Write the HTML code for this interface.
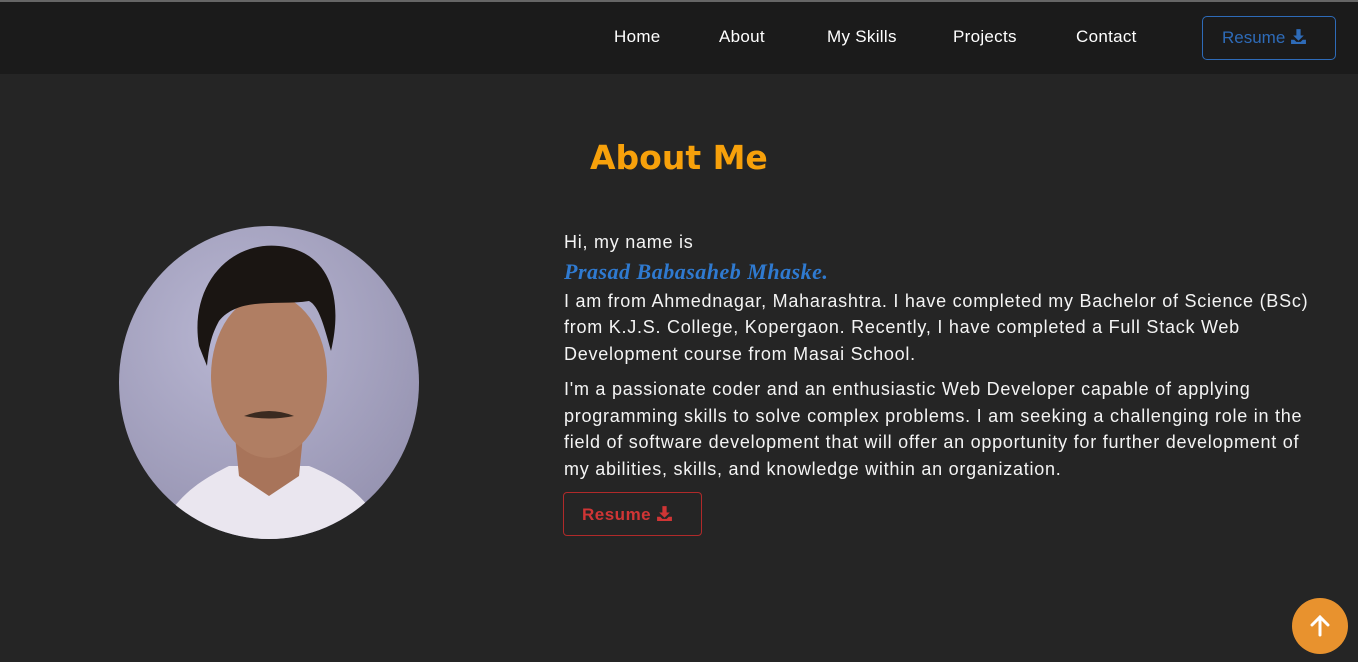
<!DOCTYPE html>
<html><head><meta charset="utf-8"><style>
*{margin:0;padding:0;box-sizing:border-box}
body{width:1358px;height:662px;background:#252525;font-family:"Liberation Sans",sans-serif;color:#fff;position:relative;overflow:hidden}
.top{position:absolute;top:0;left:0;width:1358px;height:2px;background:#666}
nav{position:absolute;top:2px;left:0;width:1358px;height:72px;background:#1b1b1b}
nav a{position:absolute;top:25px;font-size:17px;color:#fff;letter-spacing:0.3px}
.rb{position:absolute;left:1202px;top:14px;width:134px;height:44px;border:1px solid #2e6bb8;border-radius:5px;color:#2e6bb8;font-size:17px;padding:11px 0 0 19px}
h1{position:absolute;left:590px;top:138px;font-size:33px;color:#f7a10b;font-family:"Comic Sans MS","DejaVu Sans",sans-serif;font-weight:bold}
.txt{position:absolute;left:564px;top:229px;width:800px;font-size:18px;letter-spacing:0.75px;line-height:26.5px;color:#f4f4f4;white-space:nowrap}
.name{display:block;height:32px;line-height:32px;font-family:"Liberation Serif",serif;font-style:italic;color:#2f7ad0;font-size:22px;font-weight:bold;letter-spacing:0.5px}
.rr{position:absolute;left:563px;top:492px;width:139px;height:44px;border:1px solid #b02a2a;border-radius:4px;color:#d03535;font-size:17px;font-weight:bold;padding:12px 0 0 18px;letter-spacing:0.5px}
.up{position:absolute;left:1292px;top:598px;width:56px;height:56px;border-radius:50%;background:#e8922e}
.photo{position:absolute;left:119px;top:226px;width:300px;height:313px;border-radius:50%;overflow:hidden;background:radial-gradient(circle at 40% 35%,#b9b7d3,#8d8aa8)}
</style></head><body>
<div class="top"></div>
<nav>
<a style="left:614px">Home</a><a style="left:719px">About</a><a style="left:827px">My Skills</a><a style="left:953px">Projects</a><a style="left:1076px">Contact</a>
<div class="rb">Resume <svg width="17" height="17" viewBox="0 0 16 16" style="vertical-align:-2px"><path d="M6 1h4v6h3l-5 5-5-5h3z M1 11h3l2 2h4l2-2h3v4H1z" fill="#2e6bb8"/></svg></div>
</nav>
<h1>About Me</h1>
<div class="photo">
<svg width="300" height="313" viewBox="0 0 300 313">
<path d="M40 313 C50 270 90 250 110 240 L190 240 C215 250 255 270 265 313Z" fill="#eae6ef"/>
<path d="M115 200 L120 250 L150 270 L180 250 L185 200Z" fill="#a8745a"/>
<ellipse cx="150" cy="150" rx="58" ry="82" fill="#b07e63"/>
<path d="M80 120 C70 60 110 15 160 20 C210 25 225 70 212 125 C205 100 200 80 190 75 C160 80 120 70 100 95 C92 110 90 120 88 140Z" fill="#1a1512"/>
<path d="M125 190 Q150 180 175 190 Q150 195 125 190Z" fill="#3a2a20"/>
</svg></div>
<div class="txt">Hi, my name is<br><span class="name">Prasad Babasaheb Mhaske.</span>I am from Ahmednagar, Maharashtra. I have completed my Bachelor of Science (BSc)<br>from K.J.S. College, Kopergaon. Recently, I have completed a Full Stack Web<br>Development course from Masai School.<p style="margin-top:9px">I'm a passionate coder and an enthusiastic Web Developer capable of applying<br>programming skills to solve complex problems. I am seeking a challenging role in the<br>field of software development that will offer an opportunity for further development of<br>my abilities, skills, and knowledge within an organization.</p></div>
<div class="rr">Resume <svg width="17" height="17" viewBox="0 0 16 16" style="vertical-align:-2px"><path d="M6 1h4v6h3l-5 5-5-5h3z M1 11h3l2 2h4l2-2h3v4H1z" fill="#d03535"/></svg></div>
<div class="up"><svg width="56" height="56" viewBox="0 0 56 56"><path d="M28 37V19M20 27l8-8 8 8" stroke="#fff" stroke-width="3" fill="none" stroke-linecap="round"/></svg></div>
</body></html>
